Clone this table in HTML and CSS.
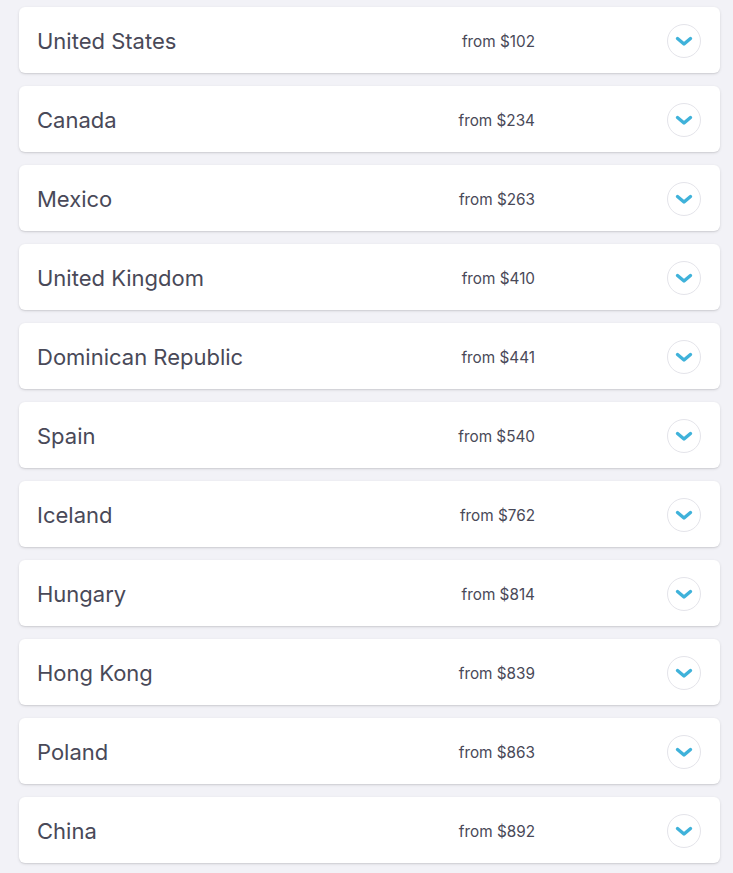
FILE: index.html
```html
<!DOCTYPE html>
<html>
<head>
<meta charset="utf-8">
<link rel="stylesheet" href="styles.css">
</head>
<body>
<ul class="list">
  <li class="card"><span class="name">United States</span><span class="price">from $102</span><span class="toggle"><svg viewBox="0 0 20 11" width="20" height="11"><path d="M3.5 2.5 L10 8 L16.5 2.5" /></svg></span></li>
  <li class="card"><span class="name">Canada</span><span class="price">from $234</span><span class="toggle"><svg viewBox="0 0 20 11" width="20" height="11"><path d="M3.5 2.5 L10 8 L16.5 2.5" /></svg></span></li>
  <li class="card"><span class="name">Mexico</span><span class="price">from $263</span><span class="toggle"><svg viewBox="0 0 20 11" width="20" height="11"><path d="M3.5 2.5 L10 8 L16.5 2.5" /></svg></span></li>
  <li class="card"><span class="name">United Kingdom</span><span class="price">from $410</span><span class="toggle"><svg viewBox="0 0 20 11" width="20" height="11"><path d="M3.5 2.5 L10 8 L16.5 2.5" /></svg></span></li>
  <li class="card"><span class="name">Dominican Republic</span><span class="price">from $441</span><span class="toggle"><svg viewBox="0 0 20 11" width="20" height="11"><path d="M3.5 2.5 L10 8 L16.5 2.5" /></svg></span></li>
  <li class="card"><span class="name">Spain</span><span class="price">from $540</span><span class="toggle"><svg viewBox="0 0 20 11" width="20" height="11"><path d="M3.5 2.5 L10 8 L16.5 2.5" /></svg></span></li>
  <li class="card"><span class="name">Iceland</span><span class="price">from $762</span><span class="toggle"><svg viewBox="0 0 20 11" width="20" height="11"><path d="M3.5 2.5 L10 8 L16.5 2.5" /></svg></span></li>
  <li class="card"><span class="name">Hungary</span><span class="price">from $814</span><span class="toggle"><svg viewBox="0 0 20 11" width="20" height="11"><path d="M3.5 2.5 L10 8 L16.5 2.5" /></svg></span></li>
  <li class="card"><span class="name">Hong Kong</span><span class="price">from $839</span><span class="toggle"><svg viewBox="0 0 20 11" width="20" height="11"><path d="M3.5 2.5 L10 8 L16.5 2.5" /></svg></span></li>
  <li class="card"><span class="name">Poland</span><span class="price">from $863</span><span class="toggle"><svg viewBox="0 0 20 11" width="20" height="11"><path d="M3.5 2.5 L10 8 L16.5 2.5" /></svg></span></li>
  <li class="card"><span class="name">China</span><span class="price">from $892</span><span class="toggle"><svg viewBox="0 0 20 11" width="20" height="11"><path d="M3.5 2.5 L10 8 L16.5 2.5" /></svg></span></li>
</ul>
</body>
</html>
```
FILE: styles.css
```css
html, body {
  margin: 0;
  padding: 0;
  background: #f2f2f7;
}
body {
  font-family: Inter, "Noto Sans", sans-serif;
  color: #494958;
}
.list {
  list-style: none;
  margin: 0;
  padding: 7px 13px 10px 19px;
  display: flex;
  flex-direction: column;
  gap: 13px;
}
.card {
  height: 66px;
  box-sizing: border-box;
  background: #ffffff;
  border-radius: 6px;
  box-shadow: 0 1px 3px rgba(0, 0, 0, 0.12), 0 1px 1px rgba(0, 0, 0, 0.05);
  display: flex;
  align-items: center;
  padding: 2px 19px 0 18px;
}
.name {
  flex: 1;
  font-size: 22px;
}
.price {
  font-size: 15.3px;
  margin-right: 132px;
}
.toggle {
  width: 34px;
  height: 34px;
  box-sizing: border-box;
  border: 1.5px solid #e4e4ea;
  border-radius: 50%;
  display: flex;
  align-items: center;
  justify-content: center;
  padding-top: 1px;
}
.toggle svg path {
  fill: none;
  stroke: #3fb2da;
  stroke-width: 3.4;
  stroke-linecap: round;
  stroke-linejoin: round;
}
```
